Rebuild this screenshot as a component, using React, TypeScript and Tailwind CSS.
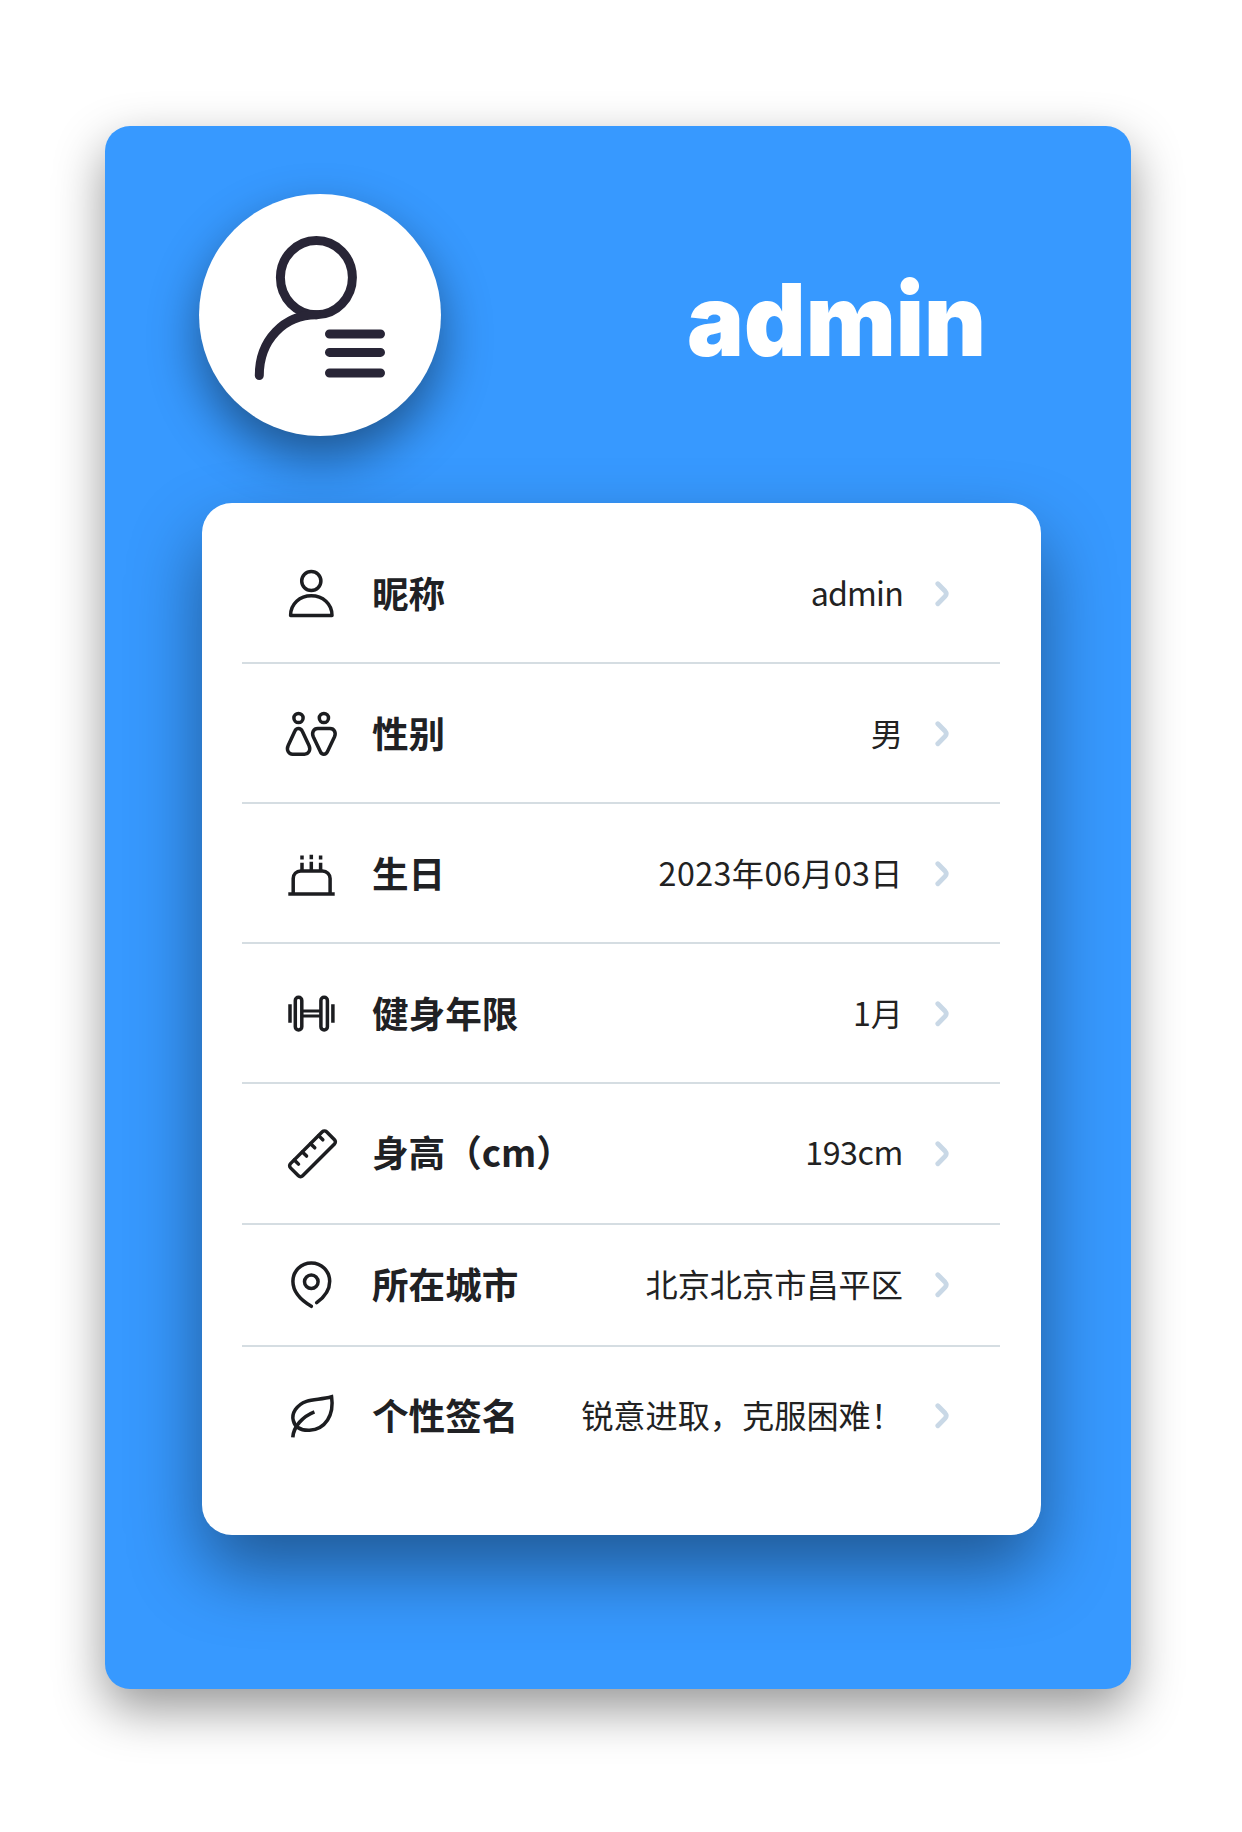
import type { ReactNode } from "react";

const ink = "#1c1d20";

function RowIcon({ children }: { children: ReactNode }) {
  return (
    <svg
      width="56"
      height="56"
      viewBox="0 0 56 56"
      fill="none"
      stroke={ink}
      strokeWidth="3.5"
      className="shrink-0"
    >
      {children}
    </svg>
  );
}

const PersonIcon = () => (
  <RowIcon>
    <circle cx="27.3" cy="15" r="9.6" />
    <path d="M6.6 49.4C6.6 38 15.8 29.8 27.3 29.8S48 38 48 49.4Z" strokeLinejoin="round" />
  </RowIcon>
);

const GenderIcon = () => (
  <RowIcon>
    <circle cx="14.5" cy="12" r="4.6" />
    <circle cx="39.9" cy="12" r="4.6" />
    <path d="M10.9 25C12.3 21.6 16.7 21.6 18.2 25L25 39.5C27 44 24.6 48.2 20.5 48.2H8.6C4.5 48.2 2.2 44 4.2 39.5Z" />
    <path d="M33.8 22.6H46C50.3 22.6 52.3 26.6 50.5 30.8L43.5 45.5C42 49 37.7 49 36.3 45.5L29.3 30.8C27.5 26.6 29.5 22.6 33.8 22.6Z" />
  </RowIcon>
);

const CakeIcon = () => (
  <RowIcon>
    <path d="M4.3 48H50.7" />
    <path d="M9.2 48V32.5C9.2 28.2 12.4 25 16.7 25H38.5C42.8 25 46.1 28.2 46.1 32.5V48" />
    <path d="M18 16.7V25M27.3 15.8V25M36.6 16.7V25M18 9.5V13.4M27.3 8.8V13.2M36.6 9.5V13.4" />
  </RowIcon>
);

const DumbbellIcon = () => (
  <RowIcon>
    <rect x="11.3" y="11.3" width="6.5" height="32.6" rx="3.2" />
    <rect x="36.9" y="11.3" width="6.5" height="32.6" rx="3.2" />
    <path d="M18 25H37M18 30H37" strokeWidth="2.8" />
    <path d="M6 18.3V36.8M48.9 18.3V36.8" strokeWidth="3.5" />
  </RowIcon>
);

const RulerIcon = () => (
  <RowIcon>
    <g transform="translate(28.5 27.8) rotate(-45)">
      <rect x="-25.5" y="-8.6" width="51" height="17.2" rx="3" />
      <path d="M-17.2 -8.5V-2.6M-5.8 -8.5V-2.6M5.8 -8.5V-2.6M17.2 -8.5V-2.6" strokeLinecap="round" />
    </g>
  </RowIcon>
);

const PinIcon = () => (
  <RowIcon>
    <circle cx="27.3" cy="24.7" r="6.8" />
    <path
      d="M27.3 49.3C18 43.8 8.9 36.5 8.9 24.3A18.4 18.4 0 0 1 45.7 24.3C45.7 33 40.4 40.2 32.7 45.7"
      strokeLinecap="round"
    />
  </RowIcon>
);

const LeafIcon = () => (
  <RowIcon>
    <path d="M47.6 8.8C38.5 11.5 30 11 22.5 13.3C12.5 16.8 7.3 25.5 9.3 32.5C11 39.3 17 42.6 25.5 42.3C41.5 41.3 50.3 27 47.6 8.8Z" />
    <path d="M8.8 49.3C9.6 38.5 18.5 28.5 30.4 23.8" strokeWidth="3.6" />
  </RowIcon>
);

const Chevron = () => (
  <svg
    width="16"
    height="28"
    viewBox="0 0 16 28"
    fill="none"
    stroke="#c9d8e6"
    strokeWidth="4.8"
    strokeLinecap="round"
    className="ml-[31px] shrink-0"
  >
    <path d="M3.8 3.7L11 11Q13.4 13.7 11 16.4L3.8 23.7" />
  </svg>
);

const rows = [
  { icon: <PersonIcon />, label: "昵称", value: "admin", size: "h-[138px]", tracking: "tracking-[-0.8px]" },
  { icon: <GenderIcon />, label: "性别", value: "男", size: "h-[140px] pt-[2px]", tracking: "tracking-normal" },
  { icon: <CakeIcon />, label: "生日", value: "2023年06月03日", size: "h-[140px] pt-[2px]", tracking: "tracking-[0.45px]" },
  { icon: <DumbbellIcon />, label: "健身年限", value: "1月", size: "h-[140px] pt-[2px]", tracking: "tracking-normal" },
  { icon: <RulerIcon />, label: "身高（cm）", value: "193cm", size: "h-[141px]", tracking: "tracking-[-0.4px]" },
  { icon: <PinIcon />, label: "所在城市", value: "北京北京市昌平区", size: "h-[122px]", tracking: "tracking-normal" },
  { icon: <LeafIcon />, label: "个性签名", value: "锐意进取，克服困难！", size: "h-[138px]", tracking: "tracking-normal" },
];

function Avatar() {
  return (
    <div className="size-[242px] shrink-0 rounded-full bg-white shadow-[0_22px_50px_rgba(0,0,0,0.44)]">
      <svg
        width="242"
        height="242"
        viewBox="0 0 242 242"
        fill="none"
        stroke="#282536"
        strokeWidth="9"
        strokeLinecap="round"
      >
        <ellipse cx="117.4" cy="83.6" rx="36" ry="37.2" />
        <path d="M60.3 181.5C60.3 146 85 120.8 117.4 120.8" />
        <path d="M130.5 140H181.5M130.5 158.4H181.5M130.5 179H181.5" />
      </svg>
    </div>
  );
}

export default function App() {
  return (
    <main className="flex h-[1832px] w-[1242px] flex-col bg-white pt-[126px] pl-[105px] font-['Noto_Sans_CJK_SC',sans-serif]">
      <section className="flex h-[1563px] w-[1026px] flex-col rounded-[25px] bg-[#3799ff] shadow-[0_20px_50px_rgba(0,0,0,0.41)]">
        <header className="flex h-[377px] shrink-0 pt-[68px] pl-[94px]">
          <Avatar />
          <h1 className="mt-[76px] ml-[246px] origin-left scale-x-[0.955] font-['Inter',sans-serif] text-[100px] leading-[100px] font-black whitespace-nowrap text-white">
            admin
          </h1>
        </header>
        <div className="ml-[97px] h-[1032px] w-[839px] shrink-0 rounded-[30px] bg-white pt-[23px] pr-[41px] pl-10 shadow-[0_35px_72px_rgba(0,0,0,0.42)]">
          <ul>
            {rows.map((row) => (
              <li
                key={row.label}
                className={`flex items-center border-b-2 border-[#d5dde2] pr-[50px] pl-[42px] last:border-b-0 ${row.size}`}
              >
                {row.icon}
                <span className="ml-[32px] pb-[3px] text-[36.6px] leading-[40px] font-bold whitespace-nowrap text-[#202124]">
                  {row.label}
                </span>
                <span
                  className={`ml-auto pb-[5px] text-[32.2px] leading-[40px] whitespace-nowrap text-[#222222] ${row.tracking}`}
                >
                  {row.value}
                </span>
                <Chevron />
              </li>
            ))}
          </ul>
        </div>
      </section>
    </main>
  );
}
